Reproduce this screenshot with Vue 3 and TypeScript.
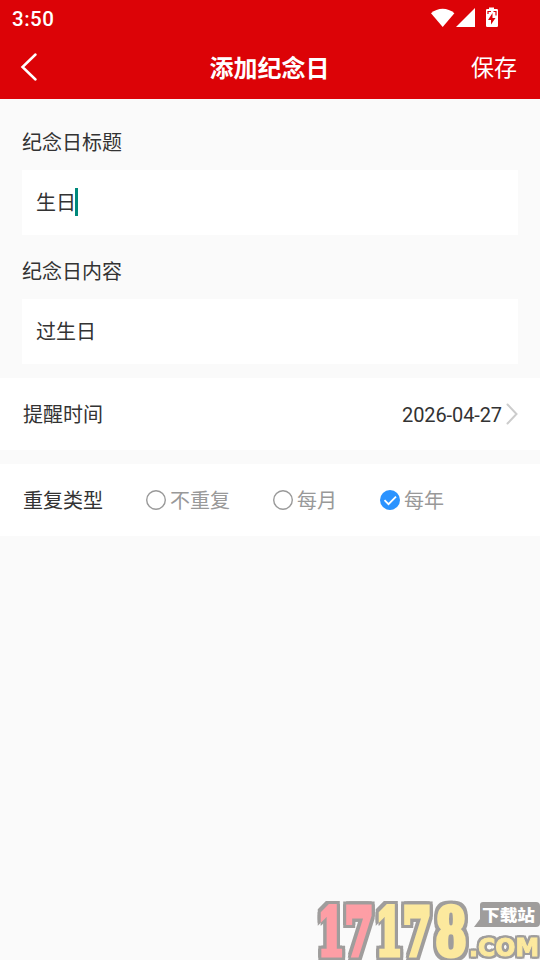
<template>
  <div class="page">
    <header class="header">
      <div class="status-bar">
        <span class="clock">3:50</span>
        <svg class="status-icons" width="68" height="22" viewBox="0 0 68 22">
          <path d="M0 5.2C6.6-.8 16.8-.8 23.4 5.2L11.7 19z" />
          <path d="M25 19L44 0v19z" />
          <path
            fill-rule="evenodd"
            d="M58-.5h5V1h2.8Q67 1 67 2.200V17.800Q67 19 65.800 19H56.200Q55 19 55 17.800V2.200Q55 1 56.200 1H58zM61.500 5L57 12h3v4.500l4.500-6.500h-3z"
          />
          <path class="battery-mark" d="M57 6V3.500h3M62.500 3.500h2.500v4" />
        </svg>
      </div>
      <div class="nav-bar">
        <button type="button" class="back-button" aria-label="返回">
          <svg width="18" height="30" viewBox="0 0 18 30">
            <path d="M15.500 2.500L2.500 15l13 12.500" />
          </svg>
        </button>
        <h1 class="title">添加纪念日</h1>
        <button type="button" class="save-button">保存</button>
      </div>
    </header>

    <!-- Text fields -->
    <section class="fields">
      <div v-for="field in fields" :key="field.label" class="form-group">
        <div class="form-label">{{ field.label }}</div>
        <div class="form-input">
          <span class="value">{{ field.value }}</span>
          <span v-if="field.focused" class="caret"></span>
        </div>
      </div>
    </section>

    <!-- Reminder date -->
    <section class="row">
      <span class="row-label">提醒时间</span>
      <span class="date">{{ date }}</span>
      <svg class="chevron" width="12" height="22" viewBox="0 0 12 22">
        <path d="M1.500 1.500L10.500 11l-9 9.500" />
      </svg>
    </section>

    <!-- Repeat type -->
    <section class="row">
      <span class="row-label">重复类型</span>
      <div class="options">
        <button
          v-for="option in options"
          :key="option"
          type="button"
          class="option"
          @click="repeat = option"
        >
          <svg width="20" height="20" viewBox="0 0 20 20">
            <template v-if="repeat === option">
              <circle class="dot" cx="10" cy="10" r="10" />
              <path class="check" d="M4.500 10.200l4 4 7.500-7.500" />
            </template>
            <circle v-else class="ring" cx="10" cy="10" r="9.300" />
          </svg>
          <span class="option-label">{{ option }}</span>
        </button>
      </div>
    </section>

    <!-- Site badge over the bottom corner -->
    <svg class="badge" width="226" height="64" viewBox="0 0 226 64">
      <text
        v-for="(digit, i) in digits"
        :key="i"
        class="digit"
        :class="{ pink: i < 2 }"
        :x="digit.x"
        y="58.500"
        :textLength="digit.width"
        lengthAdjust="spacingAndGlyphs"
      >{{ digit.char }}</text>
      <path
        class="bubble"
        d="M169 6h53q4 0 4 4v17q0 4-4 4h-62l6-8V9q0-3 3-3z"
      />
      <text
        class="bubble-text"
        x="168"
        y="24.500"
        textLength="53"
        lengthAdjust="spacingAndGlyphs"
      >下载站</text>
      <text
        class="domain"
        x="155"
        y="60"
        textLength="70"
        lengthAdjust="spacingAndGlyphs"
      >.COM</text>
    </svg>
  </div>
</template>

<script setup lang="ts">
import { ref } from "vue";

interface Field {
  label: string;
  value: string;
  focused: boolean;
}

const fields = ref<Field[]>([
  { label: "纪念日标题", value: "生日", focused: true },
  { label: "纪念日内容", value: "过生日", focused: false },
]);

const date = ref("2026-04-27");
const options = ["不重复", "每月", "每年"];
const repeat = ref("每年");

const digits = [
  { char: "1", x: 3.5, width: 27 },
  { char: "7", x: 30.5, width: 29 },
  { char: "1", x: 61.5, width: 27 },
  { char: "7", x: 88.5, width: 29 },
  { char: "8", x: 121.5, width: 31 },
];
</script>

<style>
body {
  background: #fafafa;
}
</style>

<style scoped>
.page {
  position: relative;
  height: 960px;
  overflow: hidden;
  background: #fafafa;
  color: #333;
  font-family: Roboto, "Noto Sans CJK SC", sans-serif;
  font-size: 20px;
}

button {
  padding: 0;
  border: none;
  background: none;
  color: inherit;
  font: inherit;
  cursor: pointer;
}

svg {
  display: block;
  flex-shrink: 0;
}

.header {
  height: 99px;
  background: #dc0307;
  color: #fff;
}

.status-bar {
  display: flex;
  align-items: center;
  justify-content: space-between;
  box-sizing: border-box;
  height: 37px;
  padding: 0 41px 0 12px;
}

.clock {
  font-size: 20.5px;
  font-weight: 500;
  letter-spacing: 0.5px;
}

.status-icons {
  fill: #fff;
  overflow: visible;
}

.battery-mark {
  fill: none;
  stroke: #dc0307;
  stroke-width: 1.2;
}

.nav-bar {
  display: grid;
  grid-template-columns: 1fr auto 1fr;
  align-items: center;
  height: 60px;
  padding: 0 23px 0 20px;
}

.back-button {
  justify-self: start;
}

.back-button svg {
  fill: none;
  stroke: #fff;
  stroke-width: 2.5;
  stroke-linecap: round;
}

.title {
  margin: 0 -1px 0 1px;
  padding-top: 4px;
  font-size: 24px;
  line-height: 36px;
  font-weight: 700;
}

.save-button {
  justify-self: end;
  padding-top: 4px;
  font-size: 23px;
  line-height: 36px;
}

.fields {
  padding: 29px 22px 14px;
}

.form-group + .form-group {
  margin-top: 22px;
}

.form-label {
  height: 30px;
  margin-bottom: 12px;
  line-height: 30px;
}

.form-input {
  display: flex;
  align-items: center;
  box-sizing: border-box;
  height: 65px;
  padding: 0 14px 2px;
  background: #fff;
}

.caret {
  width: 3px;
  height: 28px;
  margin-left: -1px;
  background: #00897b;
}

.row {
  display: flex;
  align-items: center;
  height: 72px;
  margin-bottom: 14px;
  padding: 0 22px 0 23px;
  background: #fff;
}

.row-label,
.option-label {
  padding-bottom: 2px;
}

.date {
  margin-left: auto;
  padding-top: 2px;
  letter-spacing: -0.1px;
}

.chevron {
  margin-left: 4px;
  fill: none;
  stroke: #ccc;
  stroke-width: 2;
  stroke-linecap: round;
}

.options {
  display: flex;
  gap: 43px;
  margin-left: 43px;
}

.option {
  display: flex;
  align-items: center;
  gap: 4px;
  color: #999;
}

.ring {
  fill: none;
  stroke: #999;
  stroke-width: 1.4;
}

.dot {
  fill: #2b93ff;
}

.check {
  fill: none;
  stroke: #fff;
  stroke-width: 1.8;
}

.badge {
  position: absolute;
  right: 0;
  bottom: 0;
}

.digit,
.domain {
  fill: #fce99e;
  stroke: #fce99e;
  stroke-linejoin: miter;
}

.digit {
  font: 700 66px "DejaVu Serif", serif;
  stroke-width: 5;
  filter: drop-shadow(3px 0 0 #9f9d9c) drop-shadow(-3px 0 0 #9f9d9c)
    drop-shadow(0 3px 0 #9f9d9c) drop-shadow(0 -3px 0 #9f9d9c);
}

.pink {
  fill: #fd9ea5;
  stroke: #fd9ea5;
}

.bubble {
  fill: #9f9d9c;
}

.bubble-text {
  fill: #fff;
  font: 900 16px "Noto Sans CJK SC", sans-serif;
}

.domain {
  font: 700 24px "DejaVu Sans", sans-serif;
  stroke-width: 1;
  filter: drop-shadow(2px 0 0 #9f9d9c) drop-shadow(-2px 0 0 #9f9d9c)
    drop-shadow(0 2px 0 #9f9d9c) drop-shadow(0 -2px 0 #9f9d9c);
}
</style>
